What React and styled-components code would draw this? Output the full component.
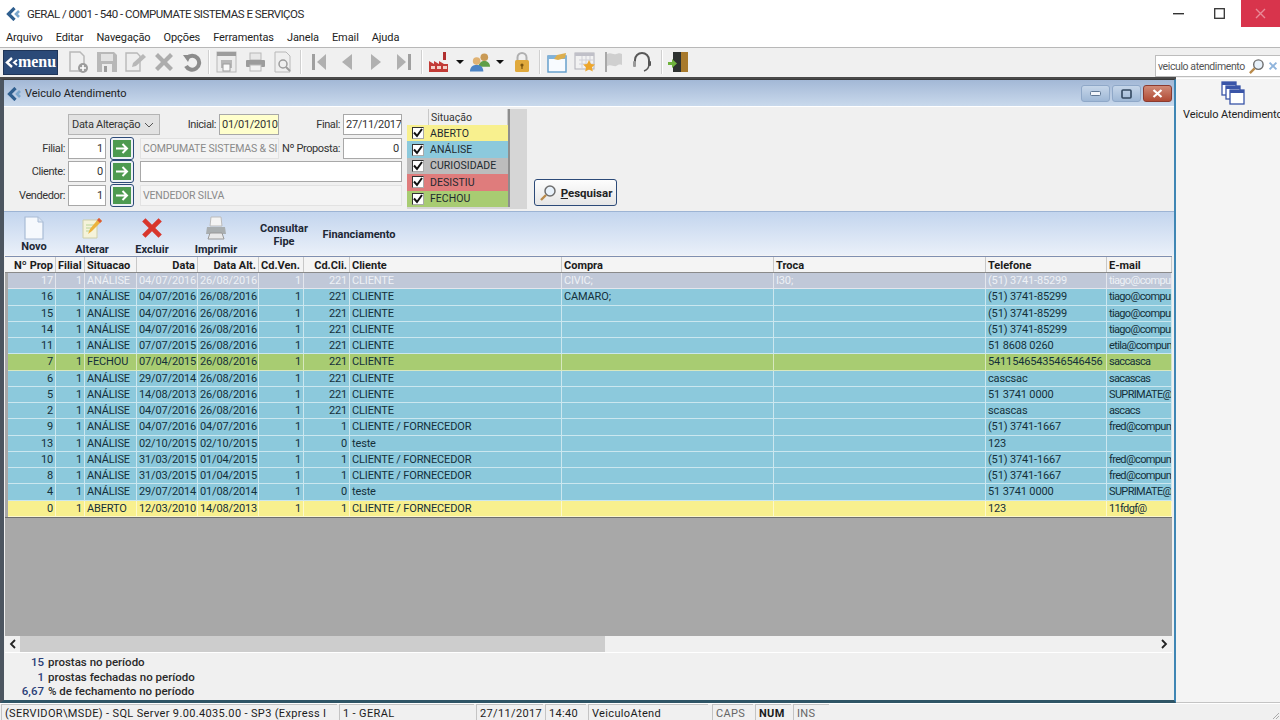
import React from "react";
import styled, { createGlobalStyle } from "styled-components";

const UI_FONT = `"Roboto", "Liberation Sans", sans-serif`;

const GlobalStyle = createGlobalStyle`
  html, body {
    margin: 0;
    padding: 0;
    background: #fff;
    overflow: hidden;
  }
  * { box-sizing: border-box; }
`;

const Page = styled.div`
  width: 1280px;
  height: 720px;
  display: flex;
  flex-direction: column;
  font-family: ${UI_FONT};
  font-size: 11px;
  color: #1c1c1c;
  background: #fff;
  overflow: hidden;
`;

/* top of the app */
const TitleBar = styled.div`
  height: 27px;
  display: flex;
  align-items: center;
  padding-left: 6px;
  font-size: 11.5px;
  letter-spacing: -0.5px;
  color: #2a2a2a;
`;

const TitleText = styled.span`
  flex: 1;
  margin-left: 7px;
  white-space: nowrap;
`;

const WinButton = styled.div`
  width: ${(p) => p.$w}px;
  height: 27px;
  display: flex;
  align-items: center;
  justify-content: center;
  background: ${(p) => (p.$close ? "#d8344c" : "transparent")};
`;

const MenuBar = styled.div`
  height: 20px;
  display: flex;
  align-items: center;
  gap: 13px;
  padding-left: 6px;
  font-size: 11px;
  letter-spacing: -0.1px;
  color: #222;
`;

const ToolBar = styled.div`
  height: 32px;
  display: flex;
  align-items: center;
  padding: 0 0 1px 3px;
  background: #f0f0f0;
  border-top: 1px solid #b8b8b8;
  border-bottom: 2px solid #4a4a4a;
  margin-right: 104px;
  position: relative;
`;

const ToolBarTail = styled.div`
  position: absolute;
  top: -1px;
  left: 100%;
  width: 104px;
  height: 31px;
  background: #f0f0f0;
  border-top: 1px solid #b8b8b8;
`;

const SearchBox = styled.div`
  position: absolute;
  top: 7px;
  left: -21px;
  width: 125px;
  height: 22px;
  display: flex;
  align-items: center;
  padding-left: 2px;
  background: #fff;
  border: 1px solid #bdbdbd;
  border-right: none;
  font-size: 10.5px;
  letter-spacing: -0.4px;
  color: #555;
  white-space: nowrap;
  gap: 3px;
`;

const MenuButton = styled.div`
  width: 55px;
  height: 25px;
  display: flex;
  align-items: center;
  justify-content: center;
  margin-right: 6px;
  background: #2b4a78;
  border: 1px solid #1f3558;
  color: #fff;
  font-family: "Liberation Serif", serif;
  font-weight: bold;
  font-size: 16px;
`;

const ToolSlot = styled.div`
  width: ${(p) => p.$w || 28.5}px;
  height: 26px;
  flex: none;
  display: flex;
  align-items: center;
  justify-content: center;
`;

const ToolSep = styled.div`
  width: 2px;
  height: 24px;
  flex: none;
  margin: 0 ${(p) => p.$r ?? 3}px 0 ${(p) => p.$l ?? 1}px;
  background: #d0d0d0;
  border-right: 1px solid #fff;
`;

const Caret = styled.div`
  width: 0;
  height: 0;
  border-left: 4px solid transparent;
  border-right: 4px solid transparent;
  border-top: 4px solid #111;
`;

/* main area */
const Body = styled.div`
  flex: 1;
  min-height: 0;
  display: flex;
`;

const Window = styled.div`
  width: 1176px;
  margin-bottom: 1px;
  display: flex;
  flex-direction: column;
  background: #f0f0f0;
  border-left: 4px solid #4c5560;
  border-right: 2px solid #3f86b4;
  border-bottom: 3px solid #2f5566;
  border-top: 1px solid #3a3a3a;
`;

const WindowTitle = styled.div`
  height: 26px;
  flex: none;
  display: flex;
  align-items: center;
  gap: 4px;
  padding: 1px 2px 0 3px;
  background: linear-gradient(#a3b8d6, #c9d9ec);
  font-size: 11px;
  color: #222;
`;

const WindowTitleText = styled.span`
  flex: 1;
`;

const WindowButton = styled.div`
  width: 29px;
  height: 17px;
  margin-left: -2px;
  display: flex;
  align-items: center;
  justify-content: center;
  border: 1px solid ${(p) => (p.$close ? "#8a3a30" : "#8fa8c8")};
  border-radius: 3px;
  background: ${(p) =>
    p.$close
      ? "linear-gradient(#d08a78, #b04a34)"
      : "linear-gradient(#c6d6e9, #9fb8d6)"};
`;

const FilterPanel = styled.div`
  height: 105px;
  flex: none;
  display: flex;
  align-items: flex-start;
  padding: 2px 0 0 3px;
  border-top: 1px solid #fff;
  background: #f0f0f0;
`;

const FilterForm = styled.div`
  width: 395px;
  margin: 5px 5px 0 0;
  display: flex;
  flex-direction: column;
  gap: 2.5px;
`;

const FilterRow = styled.div`
  height: 21px;
  display: flex;
  align-items: center;
  gap: 3px;
`;

const FieldLabel = styled.label`
  width: ${(p) => p.$w}px;
  flex: none;
  text-align: right;
  font-size: 11px;
  letter-spacing: -0.4px;
  color: #333;
  white-space: nowrap;
`;

const Select = styled.div`
  width: 92px;
  height: 21px;
  flex: none;
  margin-left: 61px;
  display: flex;
  align-items: center;
  justify-content: space-between;
  padding: 0 5px 0 3px;
  background: #e2e2e2;
  border: 1px solid #b4b4b4;
  font-size: 11px;
  letter-spacing: -0.3px;
  white-space: nowrap;
  color: #333;
`;

const TextBox = styled.div`
  width: ${(p) => p.$w}px;
  height: 21px;
  flex: none;
  display: flex;
  align-items: center;
  justify-content: ${(p) => (p.$right ? "flex-end" : "flex-start")};
  padding: 0 2px;
  background: ${(p) =>
    p.$yellow ? "#ffffcc" : p.$off ? "#f4f4f4" : "#fff"};
  border: 1px solid ${(p) => (p.$off ? "#e2e2e2" : "#a8a8a8")};
  font-size: ${(p) => (p.$off ? "10.5px" : "11px")};
  letter-spacing: ${(p) => (p.$off ? "-0.15px" : "-0.3px")};
  color: ${(p) => (p.$off ? "#8a8a8a" : "#333")};
  white-space: nowrap;
  overflow: hidden;
`;

const ArrowButton = styled.div`
  width: 24px;
  height: 23px;
  flex: none;
  margin: 0 3px 0 1px;
  padding: 2px;
  display: flex;
  background: #eef1f6;
  border: 1px solid #2c4a78;
  border-radius: 3px;
`;

const ArrowFace = styled.div`
  flex: 1;
  display: flex;
  align-items: center;
  justify-content: center;
  background: #4d9a50;
`;

const SituacaoGrid = styled.div`
  width: 120px;
  height: 100px;
  flex: none;
  display: grid;
  grid-template-columns: 22px 79px 19px;
  grid-template-rows: 16px repeat(5, 16.4px);
  background: #d6d6d6;
`;

const SituacaoHead = styled.div`
  background: #f0f0f0;
  border-right: 1px solid #c8c8c8;
  display: flex;
  align-items: center;
  padding-left: 2px;
  font-size: 10.5px;
  color: #333;
`;

const SituacaoFill = styled.div`
  grid-row: 1 / 7;
  grid-column: 3;
  background: #d6d6d6;
  border-left: 2px solid #8e8e8e;
`;

const CheckCell = styled.div`
  background: ${(p) => p.$bg};
  display: flex;
  align-items: center;
  justify-content: center;
`;

const CheckBox = styled.div`
  width: 12px;
  height: 12px;
  display: flex;
  align-items: center;
  justify-content: center;
  background: #fff;
  border: 1px solid #333;
  border-right-color: #aaa;
  border-bottom-color: #aaa;
`;

const SituacaoName = styled.div`
  background: ${(p) => p.$bg};
  display: flex;
  align-items: center;
  padding-left: 1px;
  font-size: 10.5px;
  letter-spacing: 0.05px;
  color: #1e2a30;
`;

const SearchButton = styled.div`
  width: 83px;
  height: 27px;
  flex: none;
  margin: 70px 0 0 7px;
  display: flex;
  align-items: center;
  justify-content: center;
  gap: 4px;
  background: linear-gradient(#fdfdfd, #e6e6e6);
  border: 1px solid #2c4a78;
  border-radius: 3px;
  font-weight: bold;
  font-size: 11.5px;
  color: #222;
`;

const ActionBar = styled.div`
  height: 45px;
  flex: none;
  display: flex;
  padding: 4px 0 0 4px;
  background: linear-gradient(#c3d5ee, #eaf0f9);
  border-top: 1px solid #9db4d4;
  border-bottom: 1px solid #f4f4f4;
`;

const ActionButton = styled.div`
  width: ${(p) => p.$w}px;
  height: 40px;
  flex: none;
  display: flex;
  flex-direction: column;
  align-items: center;
  justify-content: ${(p) => (p.$plain ? "center" : "flex-start")};
  padding-bottom: ${(p) => (p.$plain ? "3px" : "0")};
  font-weight: bold;
  font-size: 11px;
  line-height: 13px;
  text-align: center;
  color: #1d2735;
`;

const ActionLabel = styled.span`
  margin-top: ${(p) => p.$gap}px;
`;

const TableArea = styled.div`
  flex: 1;
  min-height: 0;
  margin-left: 1px;
  margin-right: 2px;
  display: flex;
  flex-direction: column;
  background: #a8a8a8;
  border-top: 1px solid #7f8fb0;
`;

const columns =
  "48px 29px 52px 61px 61px 45px 46px 212px 212px 212px 121px 65px";

const HeaderRow = styled.div`
  height: 16px;
  flex: none;
  display: grid;
  grid-template-columns: 3px ${columns};
  background: #f4f4f4;
  border-bottom: 1px solid #8a8a8a;
`;

const HeaderCell = styled.div`
  padding: 0 2px;
  line-height: 17px;
  text-align: ${(p) => (p.$right ? "right" : "left")};
  font-weight: bold;
  font-size: 11px;
  color: #1c1c1c;
  border-right: 1px solid #c8c8c8;
  white-space: nowrap;
  overflow: hidden;
`;

const GridRow = styled.div`
  height: 16.25px;
  flex: none;
  margin-left: 3px;
  display: grid;
  grid-template-columns: ${columns};
  background: ${(p) => p.$bg};
  color: ${(p) => (p.$selected ? "#eef1f6" : "#14303a")};
  border-bottom: 1px solid rgba(255, 255, 255, 0.55);
`;

const GridCell = styled.div`
  padding: 0 2px;
  line-height: 16px;
  font-size: 11px;
  letter-spacing: ${(p) => (p.$tight ? "-0.65px" : "-0.15px")};
  text-align: ${(p) => (p.$right ? "right" : "left")};
  border-right: 1px solid rgba(255, 255, 255, 0.55);
  white-space: nowrap;
  overflow: hidden;
`;

const GreyFill = styled.div`
  flex: 1;
  min-height: 0;
  border-top: 1px solid #6e6e6e;
`;

const ScrollBar = styled.div`
  height: 16px;
  flex: none;
  display: flex;
  align-items: center;
  padding-left: 15px;
  position: relative;
  background: #f0f0f0;
`;

const ScrollThumb = styled.div`
  width: 585px;
  height: 16px;
  background: #cdcdcd;
`;

const ScrollArrow = styled.div`
  position: absolute;
  top: 3px;
  ${(p) => (p.$right ? "right: 4px;" : "left: 4px;")}
  display: flex;
`;

const Summary = styled.div`
  height: 48px;
  flex: none;
  padding-top: 2px;
  background: #f0f0f0;
  border-top: 1px solid #fff;
  display: grid;
  grid-template-columns: 39px 1fr;
  grid-auto-rows: 14.5px;
  column-gap: 4px;
  font-size: 11.5px;
  font-weight: 500;
  color: #2a2a2a;
`;

const SummaryValue = styled.span`
  text-align: right;
  color: #2b3f78;
`;

const SidePanel = styled.div`
  flex: 1;
  display: flex;
  flex-direction: column;
  padding: 2px 0 0 7px;
  margin-bottom: 1px;
  background: #f4f4f4;
  border-bottom: 1px solid #c4c4c4;
  overflow: hidden;
`;

const SideIcon = styled.div`
  display: flex;
  justify-content: center;
  padding-left: 3px;
`;

const SideLabel = styled.span`
  margin-top: 3px;
  font-size: 11px;
  letter-spacing: -0.1px;
  white-space: nowrap;
  color: #222;
`;

const StatusBar = styled.div`
  height: 16px;
  flex: none;
  display: flex;
  gap: 2px;
  padding-left: 1px;
  background: #f0f0f0;
  position: relative;
  font-size: 11px;
  letter-spacing: 0.35px;
  color: #1c1c1c;
`;

const StatusCell = styled.div`
  width: ${(p) => p.$w}px;
  flex: none;
  margin-left: ${(p) => p.$ml || 0}px;
  padding: 0 3px;
  line-height: 17px;
  border-top: 1px solid #c4c4c4;
  border-left: 1px solid #c4c4c4;
  font-weight: ${(p) => (p.$bold ? "bold" : "normal")};
  color: ${(p) => (p.$dim ? "#666" : "#1c1c1c")};
  white-space: nowrap;
  overflow: hidden;
`;

const Grip = styled.svg`
  position: absolute;
  right: 0;
  bottom: 0;
`;

/* drawings */
const AppLogo = () => (
  <svg width="14" height="14" viewBox="0 0 14 14" fill="none">
    <path d="M8.5 1 2.5 7l6 6" stroke="#2f5f8f" strokeWidth="3.2" />
    <path d="M13 4 10 7l3 3" stroke="#7aa6cc" strokeWidth="2.6" />
  </svg>
);

const G = "#b8b8b8";
const GD = "#9c9c9c";

const IconNewDoc = () => (
  <svg width="22" height="24" viewBox="0 0 22 24">
    <path d="M3 2h10l4 4v15H3z" fill="#f0f0f0" stroke={G} strokeWidth="1.5" />
    <circle cx="16" cy="18" r="5" fill={GD} />
    <path d="M16 15v6M13 18h6" stroke="#fff" strokeWidth="1.6" />
  </svg>
);
const IconSave = () => (
  <svg width="22" height="22" viewBox="0 0 22 22">
    <path d="M1 1h17l3 3v17H1z" fill={G} />
    <rect x="5" y="3" width="12" height="7" fill="#e2e2e2" />
    <rect x="6" y="13" width="10" height="8" fill="#ececec" />
    <rect x="8" y="15" width="3" height="6" fill={GD} />
  </svg>
);
const IconEditDoc = () => (
  <svg width="22" height="22" viewBox="0 0 22 22">
    <path d="M2 2h11l3 3v15H2z" fill="#eee" stroke={G} strokeWidth="1.4" />
    <path d="M8 16l1-4L19 3l3 3-10 9z" fill={G} />
  </svg>
);
const IconCross = ({ c = "#adadad", size = 22 }) => (
  <svg width={size} height={size} viewBox="0 0 22 22" style={{ flex: "none" }}>
    <path
      d="M2 5l3-3 6 6 6-6 3 3-6 6 6 6-3 3-6-6-6 6-3-3 6-6z"
      fill={c}
    />
  </svg>
);
const IconUndo = () => (
  <svg width="20" height="20" viewBox="0 0 20 20" fill="none">
    <path d="M5 6a7 7 0 1 1-1 8" stroke="#8c8c8c" strokeWidth="4" />
    <path d="M1 3l8 0-3 7z" fill="#8c8c8c" />
  </svg>
);
const IconPreview = () => (
  <svg width="21" height="22" viewBox="0 0 21 22">
    <rect x="1" y="1" width="19" height="20" fill="#ececec" stroke={G} />
    <rect x="1" y="1" width="19" height="4" fill={GD} />
    <rect x="5" y="9" width="11" height="8" fill={G} />
    <rect x="7" y="13" width="7" height="7" fill="#fafafa" stroke={GD} />
  </svg>
);
const IconPrinter = () => (
  <svg width="21" height="20" viewBox="0 0 21 20">
    <rect x="5" y="1" width="11" height="7" fill="#e8e8e8" stroke={G} />
    <rect x="1" y="8" width="19" height="7" rx="1" fill={GD} />
    <rect x="5" y="13" width="11" height="6" fill="#f2f2f2" stroke={G} />
  </svg>
);
const IconZoomDoc = () => (
  <svg width="19" height="22" viewBox="0 0 19 22" fill="none">
    <path d="M1 1h11l4 4v16H1z" fill="#efefef" stroke={G} />
    <circle cx="9" cy="13" r="4" stroke={GD} strokeWidth="1.5" />
    <path d="M12 16l4 4" stroke={GD} strokeWidth="2" />
  </svg>
);
const IconNav = ({ dir, bar }) => (
  <svg width="16" height="20" viewBox="0 0 16 20">
    {dir === "left" ? (
      <path d={bar ? "M15 2v16L6 10z" : "M13 2v16L3 10z"} fill="#b0b0b0" />
    ) : (
      <path d={bar ? "M1 2v16l9-8z" : "M3 2v16l10-8z"} fill="#b0b0b0" />
    )}
    {bar && (
      <rect x={dir === "left" ? 1 : 12} y="2" width="3" height="16" fill="#a0a0a0" />
    )}
  </svg>
);
const IconFactory = () => (
  <svg width="21" height="22" viewBox="0 0 21 22">
    <rect x="15" y="1" width="3" height="8" fill="#b03030" />
    <path d="M1 21V10l5 3V10l5 3V10l5 3h4v8z" fill="#c23b36" />
    <rect x="3" y="15" width="4" height="3" fill="#f3d0c8" />
    <rect x="9" y="15" width="4" height="3" fill="#f3d0c8" />
    <rect x="15" y="15" width="4" height="3" fill="#f3d0c8" />
  </svg>
);
const IconUsers = () => (
  <svg width="23" height="21" viewBox="0 0 23 21">
    <circle cx="16" cy="5" r="4" fill="#c99a55" />
    <path d="M10 15c0-4 3-6 6-6s6 2 6 6z" fill="#5f9e48" />
    <circle cx="8" cy="9" r="4" fill="#e0b272" />
    <path d="M1 20c0-5 3-7 7-7s7 2 7 7z" fill="#4d84c4" />
  </svg>
);
const IconLock = () => (
  <svg width="16" height="21" viewBox="0 0 16 21" fill="none">
    <path d="M3.5 9V5.5a4.5 4.5 0 0 1 9 0V9" stroke="#b0b0b0" strokeWidth="2" />
    <rect x="1" y="8" width="14" height="12" rx="1.5" fill="#e0a93c" />
    <circle cx="8" cy="13" r="1.6" fill="#7a5512" />
    <rect x="7.4" y="13" width="1.2" height="4" fill="#7a5512" />
  </svg>
);
const IconNote = () => (
  <svg width="20" height="21" viewBox="0 0 20 21">
    <rect x="1" y="4" width="18" height="16" fill="#f8fbff" stroke="#5d9ac9" strokeWidth="1.4" />
    <rect x="1" y="4" width="18" height="3" fill="#7fb2da" />
    <path d="M7 7l3-4 9-2-1 5-7 2z" fill="#dcae4e" />
  </svg>
);
const IconCalendarStar = () => (
  <svg width="22" height="21" viewBox="0 0 22 21">
    <rect x="1" y="1" width="19" height="16" fill="#f2f2f2" stroke="#b0b0b8" />
    <rect x="1" y="1" width="19" height="3" fill="#c0c0c8" />
    <path d="M5 8h14M5 12h14M8 4v13M12 4v13M16 4v13" stroke="#d0d0d8" />
    <path
      d="M15 8l1.9 4 4.1.5-3 2.8.8 4.2-3.8-2.1-3.8 2.1.8-4.2-3-2.8 4.1-.5z"
      fill="#eda62c"
    />
  </svg>
);
const IconFlag = () => (
  <svg width="19" height="22" viewBox="0 0 19 22">
    <rect x="1" y="1" width="2" height="20" fill="#a8a8a8" />
    <path d="M3 3c4-2 6 1 9 0s4-1 6 0v11c-3-1-4 0-6 1s-5-2-9 0z" fill="#cfcfcf" />
  </svg>
);
const IconHeadset = () => (
  <svg width="20" height="22" viewBox="0 0 20 22" fill="none">
    <path d="M3 12V9a7 7 0 0 1 14 0v3" stroke="#585858" strokeWidth="2" />
    <path d="M17 13c0 4-2 6-5 7" stroke="#585858" strokeWidth="1.4" />
    <rect x="1" y="10" width="3" height="6" rx="1" fill="#9a9a9a" />
    <rect x="16" y="10" width="3" height="5" rx="1" fill="#555" />
  </svg>
);
const IconDoor = () => (
  <svg width="22" height="22" viewBox="0 0 22 22">
    <rect x="6" y="1" width="11" height="20" fill="#2e3230" />
    <path d="M14 1h7v20h-7z" fill="#a87a2c" />
    <path d="M1 11h4V8l5 4.5L5 17v-3H1z" fill="#6fb33c" />
  </svg>
);
const IconMagnifier = ({ size = 18 }) => (
  <svg width={size} height={size} viewBox="0 0 18 18" fill="none" style={{ flex: "none" }}>
    <circle cx="11" cy="7" r="5" fill="#e8f1fa" stroke="#6e6e6e" strokeWidth="1.5" />
    <path d="M7 11l-5 5" stroke="#b98a4a" strokeWidth="2.4" />
  </svg>
);
const IconWindows = () => (
  <svg width="24" height="24" viewBox="0 0 24 24">
    <rect x="1" y="1" width="14" height="13" fill="#fff" stroke="#3a55a8" strokeWidth="1.3" />
    <rect x="1" y="1" width="14" height="3" fill="#3a55a8" />
    <rect x="5" y="5" width="14" height="13" fill="#fff" stroke="#3a55a8" strokeWidth="1.3" />
    <rect x="5" y="5" width="14" height="3" fill="#3a55a8" />
    <rect x="9" y="9" width="14" height="14" fill="#fff" stroke="#3a55a8" strokeWidth="1.3" />
    <rect x="9" y="9" width="14" height="3" fill="#3a55a8" />
  </svg>
);
const IconArrowRight = () => (
  <svg width="14" height="13" viewBox="0 0 14 13" fill="none">
    <path d="M1 6.5h11M7.5 2l4.5 4.5L7.5 11" stroke="#fff" strokeWidth="2" />
  </svg>
);
const IconCheck = () => (
  <svg width="10" height="10" viewBox="0 0 10 10" fill="none">
    <path d="M1 4.5l3 3.5L9 1" stroke="#111" strokeWidth="2" />
  </svg>
);
const IconChevronDown = () => (
  <svg width="10" height="6" viewBox="0 0 10 6" fill="none">
    <path d="M1 1l4 4 4-4" stroke="#555" strokeWidth="1" />
  </svg>
);
const IconChevron = ({ right }) => (
  <svg width="8" height="10" viewBox="0 0 8 10" fill="none">
    <path
      d={right ? "M2 1l4 4-4 4" : "M6 1L2 5l4 4"}
      stroke="#222"
      strokeWidth="1.8"
    />
  </svg>
);
const IconBigDoc = () => (
  <svg width="20" height="24" viewBox="0 0 20 24">
    <path d="M1 1h13l5 5v17H1z" fill="#f6f9fd" stroke="#a9bcd6" strokeWidth="1.2" />
    <path d="M14 1v5h5" fill="#dbe5f2" stroke="#a9bcd6" />
  </svg>
);
const IconBigEdit = () => (
  <svg width="22" height="24" viewBox="0 0 22 24">
    <path d="M2 4h14v18H2z" fill="#f5f3da" stroke="#cfcfa8" />
    <path d="M5 9h8M5 12h6M5 15h4" stroke="#b8d49a" />
    <path d="M7 18l2-5L18 2l3 3-10 10z" fill="#ecb33c" />
    <path d="M18 2l3 3-2 2-3-3z" fill="#d8583c" />
  </svg>
);
const IconBigPrinter = () => (
  <svg width="22" height="24" viewBox="0 0 22 24">
    <path d="M6 1h10l1 9H5z" fill="#f4f4f4" stroke="#bbb" />
    <path d="M2 11h18l1 7H1z" fill="#a9aeb0" />
    <path d="M5 17h12l2 6H3z" fill="#e9e9e9" stroke="#999" />
  </svg>
);

const menuItems = ["Arquivo", "Editar", "Navegação", "Opções", "Ferramentas", "Janela", "Email", "Ajuda"];

const STATUS = {
  aberto: "#f8f08e",
  analise: "#8cc9dc",
  curiosidade: "#bcbcbc",
  desistiu: "#df7c7c",
  fechou: "#a8cc72",
};

const situacoes = [
  ["ABERTO", STATUS.aberto],
  ["ANÁLISE", STATUS.analise],
  ["CURIOSIDADE", STATUS.curiosidade],
  ["DESISTIU", STATUS.desistiu],
  ["FECHOU", STATUS.fechou],
];

const headers = [
  ["Nº Prop", true],
  ["Filial", false],
  ["Situacao", false],
  ["Data", true],
  ["Data Alt.", true],
  ["Cd.Ven.", false],
  ["Cd.Cli.", true],
  ["Cliente", false],
  ["Compra", false],
  ["Troca", false],
  ["Telefone", false],
  ["E-mail", false],
];

const C = "CLIENTE";
const CF = "CLIENTE / FORNECEDOR";
const T = "(51) 3741-85299";
const F = "(51) 3741-1667";

const rows = [
  ["17", "ANÁLISE", "04/07/2016", "26/08/2016", "1", "221", C, "CIVIC;", "I30;", T, "tiago@compur", "selected"],
  ["16", "ANÁLISE", "04/07/2016", "26/08/2016", "1", "221", C, "CAMARO;", "", T, "tiago@compur"],
  ["15", "ANÁLISE", "04/07/2016", "26/08/2016", "1", "221", C, "", "", T, "tiago@compur"],
  ["14", "ANÁLISE", "04/07/2016", "26/08/2016", "1", "221", C, "", "", T, "tiago@compur"],
  ["11", "ANÁLISE", "07/07/2015", "26/08/2016", "1", "221", C, "", "", "51 8608 0260", "etila@compum"],
  ["7", "FECHOU", "07/04/2015", "26/08/2016", "1", "221", C, "", "", "5411546543546546456", "saccasca"],
  ["6", "ANÁLISE", "29/07/2014", "26/08/2016", "1", "221", C, "", "", "cascsac", "sacascas"],
  ["5", "ANÁLISE", "14/08/2013", "26/08/2016", "1", "221", C, "", "", "51 3741 0000", "SUPRIMATE@"],
  ["2", "ANÁLISE", "04/07/2016", "26/08/2016", "1", "221", C, "", "", "scascas", "ascacs"],
  ["9", "ANÁLISE", "04/07/2016", "04/07/2016", "1", "1", CF, "", "", F, "fred@compum"],
  ["13", "ANÁLISE", "02/10/2015", "02/10/2015", "1", "0", "teste", "", "", "123", ""],
  ["10", "ANÁLISE", "31/03/2015", "01/04/2015", "1", "1", CF, "", "", F, "fred@compum"],
  ["8", "ANÁLISE", "31/03/2015", "01/04/2015", "1", "1", CF, "", "", F, "fred@compum"],
  ["4", "ANÁLISE", "29/07/2014", "01/08/2014", "1", "0", "teste", "", "", "51 3741 0000", "SUPRIMATE@"],
  ["0", "ABERTO", "12/03/2010", "14/08/2013", "1", "1", CF, "", "", "123", "11fdgf@"],
];

const rowColor = (row) => {
  if (row[11] === "selected") return "#c0c8d8";
  if (row[1] === "FECHOU") return STATUS.fechou;
  if (row[1] === "ABERTO") return STATUS.aberto;
  return STATUS.analise;
};

export default function App() {
  return (
    <Page>
      <GlobalStyle />
      <TitleBar>
        <AppLogo />
        <TitleText>GERAL / 0001 - 540 - COMPUMATE SISTEMAS E SERVIÇOS</TitleText>
        <WinButton $w={38}>
          <svg width="11" height="2"><rect width="11" height="1.4" fill="#333" /></svg>
        </WinButton>
        <WinButton $w={44}>
          <svg width="11" height="11"><rect x="0.7" y="0.7" width="9.6" height="9.6" fill="none" stroke="#333" strokeWidth="1.3" /></svg>
        </WinButton>
        <WinButton $w={39} $close>
          <svg width="11" height="11" fill="none"><path d="M1 1l9 9M10 1l-9 9" stroke="#e88a98" strokeWidth="1.4" /></svg>
        </WinButton>
      </TitleBar>
      <MenuBar>
        {menuItems.map((m) => (
          <span key={m}>{m}</span>
        ))}
      </MenuBar>
      <ToolBar>
        <MenuButton>
          <svg width="13" height="13" viewBox="0 0 13 13" fill="none">
            <path d="M7 2L2 6.5 7 11" stroke="#fff" strokeWidth="2.4" />
            <path d="M12 4L9 6.5 12 9" stroke="#fff" strokeWidth="2" />
          </svg>
          menu
        </MenuButton>
        <ToolSlot><IconNewDoc /></ToolSlot>
        <ToolSlot><IconSave /></ToolSlot>
        <ToolSlot><IconEditDoc /></ToolSlot>
        <ToolSlot><IconCross /></ToolSlot>
        <ToolSlot><IconUndo /></ToolSlot>
        <ToolSep />
        <ToolSlot><IconPreview /></ToolSlot>
        <ToolSlot><IconPrinter /></ToolSlot>
        <ToolSlot><IconZoomDoc /></ToolSlot>
        <ToolSep $l={1.5} />
        <ToolSlot><IconNav dir="left" bar /></ToolSlot>
        <ToolSlot><IconNav dir="left" /></ToolSlot>
        <ToolSlot><IconNav dir="right" /></ToolSlot>
        <ToolSlot><IconNav dir="right" bar /></ToolSlot>
        <ToolSep $l={2} $r={4} />
        <ToolSlot $w={24}><IconFactory /></ToolSlot>
        <ToolSlot $w={18}><Caret /></ToolSlot>
        <ToolSlot $w={22}><IconUsers /></ToolSlot>
        <ToolSlot $w={18}><Caret /></ToolSlot>
        <ToolSlot $w={26}><IconLock /></ToolSlot>
        <ToolSep $l={4} $r={2} />
        <ToolSlot><IconNote /></ToolSlot>
        <ToolSlot><IconCalendarStar /></ToolSlot>
        <ToolSlot><IconFlag /></ToolSlot>
        <ToolSlot><IconHeadset /></ToolSlot>
        <ToolSep $l={4} $r={3} />
        <ToolSlot $w={24}><IconDoor /></ToolSlot>
        <ToolBarTail>
          <SearchBox>
            veiculo atendimento
            <IconMagnifier size={17} />
            <IconCross c="#8fb4dc" size={10} />
          </SearchBox>
        </ToolBarTail>
      </ToolBar>
      <Body>
        <Window>
          <WindowTitle>
            <AppLogo />
            <WindowTitleText>Veiculo Atendimento</WindowTitleText>
            <WindowButton>
              <svg width="11" height="5"><rect x="0.5" y="0.5" width="10" height="4" rx="1" fill="#f2f5fa" stroke="#5f7794" /></svg>
            </WindowButton>
            <WindowButton>
              <svg width="11" height="10" fill="none"><rect x="1" y="1" width="9" height="8" rx="1" stroke="#33485f" strokeWidth="1.6" /></svg>
            </WindowButton>
            <WindowButton $close>
              <svg width="11" height="9" fill="none"><path d="M1.5 1l8 7M9.5 1l-8 7" stroke="#fff" strokeWidth="2.2" /></svg>
            </WindowButton>
          </WindowTitle>
          <FilterPanel>
            <FilterForm>
              <FilterRow>
                <Select>
                  Data Alteração
                  <IconChevronDown />
                </Select>
                <FieldLabel $w={53}>Inicial:</FieldLabel>
                <TextBox $w={60} $yellow>01/01/2010</TextBox>
                <FieldLabel $w={58}>Final:</FieldLabel>
                <TextBox $w={59}>27/11/2017</TextBox>
              </FilterRow>
              <FilterRow>
                <FieldLabel $w={58}>Filial:</FieldLabel>
                <TextBox $w={38} $right>1</TextBox>
                <ArrowButton><ArrowFace><IconArrowRight /></ArrowFace></ArrowButton>
                <TextBox $w={139} $off>COMPUMATE SISTEMAS &amp; SI</TextBox>
                <FieldLabel $w={58}>Nº Proposta:</FieldLabel>
                <TextBox $w={59} $right>0</TextBox>
              </FilterRow>
              <FilterRow>
                <FieldLabel $w={58}>Cliente:</FieldLabel>
                <TextBox $w={38} $right>0</TextBox>
                <ArrowButton><ArrowFace><IconArrowRight /></ArrowFace></ArrowButton>
                <TextBox $w={262} />
              </FilterRow>
              <FilterRow>
                <FieldLabel $w={58}>Vendedor:</FieldLabel>
                <TextBox $w={38} $right>1</TextBox>
                <ArrowButton><ArrowFace><IconArrowRight /></ArrowFace></ArrowButton>
                <TextBox $w={262} $off>VENDEDOR SILVA</TextBox>
              </FilterRow>
            </FilterForm>
            <SituacaoGrid>
              <SituacaoHead />
              <SituacaoHead>Situação</SituacaoHead>
              <SituacaoFill />
              {situacoes.map(([name, bg]) => (
                <React.Fragment key={name}>
                  <CheckCell $bg={bg}>
                    <CheckBox><IconCheck /></CheckBox>
                  </CheckCell>
                  <SituacaoName $bg={bg}>{name}</SituacaoName>
                </React.Fragment>
              ))}
            </SituacaoGrid>
            <SearchButton>
              <IconMagnifier />
              <span><u>P</u>esquisar</span>
            </SearchButton>
          </FilterPanel>
          <ActionBar>
            <ActionButton $w={52}>
              <IconBigDoc />
              <ActionLabel $gap={0}>Novo</ActionLabel>
            </ActionButton>
            <ActionButton $w={64}>
              <IconBigEdit />
              <ActionLabel $gap={3}>Alterar</ActionLabel>
            </ActionButton>
            <ActionButton $w={56}>
              <IconCross c="#d8362c" size={24} />
              <ActionLabel $gap={3}>Excluir</ActionLabel>
            </ActionButton>
            <ActionButton $w={72}>
              <IconBigPrinter />
              <ActionLabel $gap={3}>Imprimir</ActionLabel>
            </ActionButton>
            <ActionButton $w={64} $plain>
              <span>Consultar<br />Fipe</span>
            </ActionButton>
            <ActionButton $w={86} $plain>Financiamento</ActionButton>
          </ActionBar>
          <TableArea>
            <HeaderRow>
              <span />
              {headers.map(([label, right]) => (
                <HeaderCell key={label} $right={right}>{label}</HeaderCell>
              ))}
            </HeaderRow>
            {rows.map((r) => (
              <GridRow key={r[0]} $bg={rowColor(r)} $selected={r[11] === "selected"}>
                <GridCell $right>{r[0]}</GridCell>
                <GridCell $right>1</GridCell>
                <GridCell>{r[1]}</GridCell>
                <GridCell $right>{r[2]}</GridCell>
                <GridCell $right>{r[3]}</GridCell>
                <GridCell $right>{r[4]}</GridCell>
                <GridCell $right>{r[5]}</GridCell>
                <GridCell>{r[6]}</GridCell>
                <GridCell>{r[7]}</GridCell>
                <GridCell>{r[8]}</GridCell>
                <GridCell>{r[9]}</GridCell>
                <GridCell $tight>{r[10]}</GridCell>
              </GridRow>
            ))}
            <GreyFill />
            <ScrollBar>
              <ScrollArrow><IconChevron /></ScrollArrow>
              <ScrollThumb />
              <ScrollArrow $right><IconChevron right /></ScrollArrow>
            </ScrollBar>
            <Summary>
              <SummaryValue>15</SummaryValue>
              <span>prostas no período</span>
              <SummaryValue>1</SummaryValue>
              <span>prostas fechadas no período</span>
              <SummaryValue>6,67</SummaryValue>
              <span>% de fechamento no período</span>
            </Summary>
          </TableArea>
        </Window>
        <SidePanel>
          <SideIcon><IconWindows /></SideIcon>
          <SideLabel>Veiculo Atendimento</SideLabel>
        </SidePanel>
      </Body>
      <StatusBar>
        <StatusCell $w={336}>(SERVIDOR\MSDE) - SQL Server 9.00.4035.00 - SP3 (Express I</StatusCell>
        <StatusCell $w={135}>1 - GERAL</StatusCell>
        <StatusCell $w={67}>27/11/2017</StatusCell>
        <StatusCell $w={41}>14:40</StatusCell>
        <StatusCell $w={120}>VeiculoAtend</StatusCell>
        <StatusCell $w={41} $dim $ml={2}>CAPS</StatusCell>
        <StatusCell $w={36} $bold>NUM</StatusCell>
        <StatusCell $w={36} $dim>INS</StatusCell>
        <Grip width="8" height="8" viewBox="0 0 8 8" fill="none">
          <path d="M1 7l6-6M4 7l3-3" stroke="#aaa" />
        </Grip>
      </StatusBar>
    </Page>
  );
}
